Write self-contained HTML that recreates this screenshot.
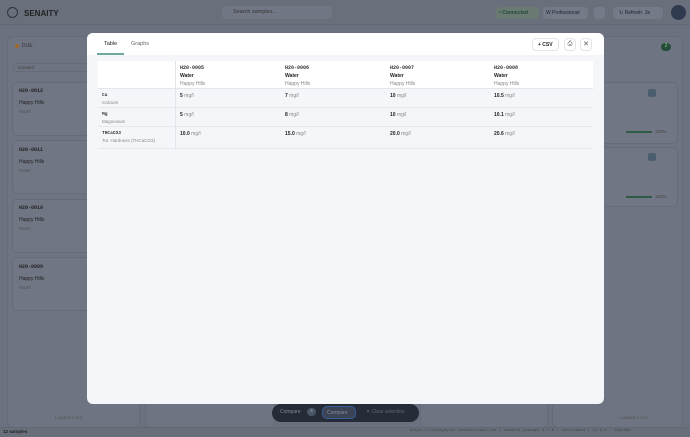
<!DOCTYPE html><html><head><style>
*{box-sizing:border-box;margin:0;padding:0}
body{width:690px;height:437px;overflow:hidden;background:#6c7180;font-family:"Liberation Sans",sans-serif;position:relative;font-size:6px;color:#333}
.abs{position:absolute}
.hdr{left:0;top:0;width:690px;height:25px;background:#6a6f7c;border-bottom:1px solid #636876}
.col{background:#6f7482;border:1px solid #666b79;border-radius:6px}
.card{background:#717684;border:1px solid #666b79;border-radius:5px}
.mono{font-family:"Liberation Mono",monospace;font-weight:bold}
.modal{left:87px;top:33px;width:517px;height:371px;background:#f5f6f9;border-radius:6px;overflow:hidden}
.mtop{left:0;top:0;width:517px;height:22px;background:#fff}
.tbl{left:11px;top:27px;width:495px}
.b{font-weight:bold;color:#222}
.g{color:#888}
.btn{background:#fff;border:1px solid #e3e5ea;border-radius:4px}
</style></head><body>
<div class="abs hdr"></div>
<div class="abs" style="left:7px;top:7px;width:11px;height:11px;border:1.5px solid #2e3442;border-radius:50%"></div>
<div class="abs b" style="left:24px;top:9px;font-size:8px;color:#222">SENAITY</div>
<div class="abs" style="left:222px;top:6px;width:110px;height:13px;background:#727786;border-radius:4px;color:#333;padding:3px 0 0 11px;font-size:5.5px">Search samples...</div>
<div class="abs" style="left:496px;top:7px;width:43px;height:12px;background:#6a7a72;border-radius:4px;color:#224a33;font-size:5px;padding:3px 3px;font-weight:bold">• Connected</div>
<div class="abs" style="left:543px;top:7px;width:45px;height:12px;background:#757a88;border-radius:4px;color:#223;font-size:5px;padding:3px 3px">W Professional</div>
<div class="abs" style="left:594px;top:7px;width:11px;height:12px;background:#757a88;border-radius:3px"></div>
<div class="abs" style="left:613px;top:7px;width:50px;height:12px;background:#757a88;border-radius:4px;color:#223;font-size:5px;padding:3px 6px">↻ Refresh &nbsp;3s</div>
<div class="abs" style="left:671px;top:5px;width:15px;height:15px;background:#2f3a4e;border-radius:50%"></div>

<div class="abs col" style="left:7px;top:36px;width:133px;height:392px"></div>
<div class="abs" style="left:15px;top:44px;width:4px;height:4px;border-radius:50%;background:#a06a2a"></div>
<div class="abs" style="left:22px;top:43px;font-size:5px;color:#333">DUE</div>
<div class="abs" style="left:13px;top:63px;width:122px;height:9px;border:1px solid #666b79;border-radius:3px;font-size:4.5px;color:#444;padding:1px 4px">Created</div>
<div class="abs card" style="left:12px;top:82px;width:128px;height:54px"></div>
<div class="abs card" style="left:12px;top:140px;width:128px;height:54px"></div>
<div class="abs card" style="left:12px;top:199px;width:128px;height:54px"></div>
<div class="abs card" style="left:12px;top:257px;width:128px;height:54px"></div>
<div class="abs mono" style="left:19px;top:88px;font-size:5px;color:#222">H20-0012</div>
<div class="abs" style="left:19px;top:100px;font-size:5px;color:#222">Happy Hills</div><div class="abs" style="left:19px;top:109px;font-size:4.5px;color:#555">Water</div>
<div class="abs mono" style="left:19px;top:147px;font-size:5px;color:#222">H20-0011</div>
<div class="abs" style="left:19px;top:159px;font-size:5px;color:#222">Happy Hills</div><div class="abs" style="left:19px;top:168px;font-size:4.5px;color:#555">Water</div>
<div class="abs mono" style="left:19px;top:205px;font-size:5px;color:#222">H20-0010</div>
<div class="abs" style="left:19px;top:217px;font-size:5px;color:#222">Happy Hills</div><div class="abs" style="left:19px;top:226px;font-size:4.5px;color:#555">Water</div>
<div class="abs mono" style="left:19px;top:264px;font-size:5px;color:#222">H20-0009</div>
<div class="abs" style="left:19px;top:276px;font-size:5px;color:#222">Happy Hills</div><div class="abs" style="left:19px;top:285px;font-size:4.5px;color:#555">Water</div>
<div class="abs" style="left:55px;top:415px;font-size:4.5px;color:#555">Loaded 4 of 4</div>
<div class="abs col" style="left:145px;top:36px;width:130px;height:392px"></div>
<div class="abs col" style="left:420px;top:36px;width:128px;height:392px"></div>
<div class="abs col" style="left:552px;top:36px;width:131px;height:392px"></div>
<div class="abs" style="left:661px;top:43px;width:10px;height:8px;background:#254d3a;border-radius:4px;color:#9c9;font-size:5px;text-align:center">2</div>
<div class="abs card" style="left:600px;top:82px;width:78px;height:62px"></div>
<div class="abs card" style="left:600px;top:147px;width:78px;height:60px"></div>
<div class="abs" style="left:648px;top:89px;width:8px;height:8px;background:#4a5e70;border-radius:2px"></div>
<div class="abs" style="left:648px;top:153px;width:8px;height:8px;background:#4a5e70;border-radius:2px"></div>
<div class="abs" style="left:626px;top:131px;width:26px;height:1.5px;background:#2e5a48"></div>
<div class="abs" style="left:626px;top:196px;width:26px;height:1.5px;background:#2e5a48"></div>
<div class="abs" style="left:655px;top:129px;font-size:4.5px;color:#444">100%</div>
<div class="abs" style="left:655px;top:194px;font-size:4.5px;color:#444">100%</div>
<div class="abs" style="left:620px;top:415px;font-size:4.5px;color:#555">Loaded 2 of 2</div>
<div class="abs" style="left:0;top:427px;width:690px;height:10px;background:#696e7b;border-top:1px solid #636876"></div>
<div class="abs b" style="left:3px;top:429px;font-size:4.5px;color:#222">12 samples</div>
<div class="abs" style="left:410px;top:429px;font-size:4px;color:#444;font-family:'Liberation Mono',monospace">https://ridingbytes.senaitecloud.com | senaite.jsonapi 2.7.0 · unreleased | v1.0.0 · 764c5ab</div>
<div class="abs" style="left:272px;top:404px;width:147px;height:18px;background:#252c38;border-radius:9px"></div>
<div class="abs" style="left:280px;top:409px;font-size:5px;color:#889">Compare</div>
<div class="abs" style="left:307px;top:408px;width:9px;height:8px;border-radius:4px;background:#4a5565;color:#aab;font-size:4.5px;text-align:center">4</div>
<div class="abs" style="left:322px;top:406px;width:34px;height:13px;border:1px solid #3a5a9a;border-radius:5px;background:#3a4454;color:#889;font-size:5px;padding:3px 4px">Compare</div>
<div class="abs" style="left:366px;top:409px;font-size:5px;color:#667">✕ Clear selection</div>

<div class="abs modal">
 <div class="abs mtop"></div>
 <div class="abs" style="left:17px;top:8px;font-size:5.5px;color:#222">Table</div>
 <div class="abs" style="left:44px;top:8px;font-size:5.5px;color:#666">Graphs</div>
 <div class="abs" style="left:10px;top:20px;width:27px;height:1.5px;background:#6fa8a0"></div>
 <div class="abs btn b" style="left:445px;top:5px;width:27px;height:13px;font-size:5px;padding:3px 5px">+ CSV</div>
 <div class="abs btn" style="left:477px;top:5px;width:12px;height:13px;font-size:6px;text-align:center;padding-top:2px;color:#555">⎙</div>
 <div class="abs btn" style="left:493px;top:5px;width:12px;height:13px;font-size:7px;text-align:center;padding-top:1px;color:#555">✕</div>
 <div class="abs" style="left:11px;top:28px;width:495px;height:28px;background:#fff;border-bottom:1px solid #e2e5eb"></div>
 <div class="abs" style="left:88px;top:28px;width:1px;height:88px;background:#e2e5eb"></div>
 <div class="abs" style="left:11px;top:74px;width:495px;height:1px;background:#e6e8ec"></div>
 <div class="abs" style="left:11px;top:93px;width:495px;height:1px;background:#e6e8ec"></div>
 <div class="abs" style="left:11px;top:115px;width:495px;height:1px;background:#e6e8ec"></div>
 <div class="abs" style="left:93px;top:31px;line-height:8px;font-size:5px"><div class="mono">H20-0005</div><div class="b">Water</div><div class="g">Happy Hills</div></div>
 <div class="abs" style="left:198px;top:31px;line-height:8px;font-size:5px"><div class="mono">H20-0006</div><div class="b">Water</div><div class="g">Happy Hills</div></div>
 <div class="abs" style="left:303px;top:31px;line-height:8px;font-size:5px"><div class="mono">H20-0007</div><div class="b">Water</div><div class="g">Happy Hills</div></div>
 <div class="abs" style="left:407px;top:31px;line-height:8px;font-size:5px"><div class="mono">H20-0008</div><div class="b">Water</div><div class="g">Happy Hills</div></div>
 <div class="abs" style="left:15px;top:59px;line-height:7px;font-size:4.5px"><div class="mono">Ca</div><div class="g">Calcium</div></div>
 <div class="abs" style="left:15px;top:78px;line-height:7px;font-size:4.5px"><div class="mono">Mg</div><div class="g">Magnesium</div></div>
 <div class="abs" style="left:15px;top:97px;line-height:7px;font-size:4.5px"><div class="mono">THCaCO3</div><div class="g">Tot. Hardness (THCaCO3)</div></div>
 <div class="abs" style="left:93px;top:60px;font-size:5px"><span class="b">5</span> <span class="g">mg/l</span></div>
 <div class="abs" style="left:198px;top:60px;font-size:5px"><span class="b">7</span> <span class="g">mg/l</span></div>
 <div class="abs" style="left:303px;top:60px;font-size:5px"><span class="b">10</span> <span class="g">mg/l</span></div>
 <div class="abs" style="left:407px;top:60px;font-size:5px"><span class="b">10.5</span> <span class="g">mg/l</span></div>
 <div class="abs" style="left:93px;top:79px;font-size:5px"><span class="b">5</span> <span class="g">mg/l</span></div>
 <div class="abs" style="left:198px;top:79px;font-size:5px"><span class="b">8</span> <span class="g">mg/l</span></div>
 <div class="abs" style="left:303px;top:79px;font-size:5px"><span class="b">10</span> <span class="g">mg/l</span></div>
 <div class="abs" style="left:407px;top:79px;font-size:5px"><span class="b">10.1</span> <span class="g">mg/l</span></div>
 <div class="abs" style="left:93px;top:98px;font-size:5px"><span class="b">10.0</span> <span class="g">mg/l</span></div>
 <div class="abs" style="left:198px;top:98px;font-size:5px"><span class="b">15.0</span> <span class="g">mg/l</span></div>
 <div class="abs" style="left:303px;top:98px;font-size:5px"><span class="b">20.0</span> <span class="g">mg/l</span></div>
 <div class="abs" style="left:407px;top:98px;font-size:5px"><span class="b">20.6</span> <span class="g">mg/l</span></div>
</div>
</body></html>
